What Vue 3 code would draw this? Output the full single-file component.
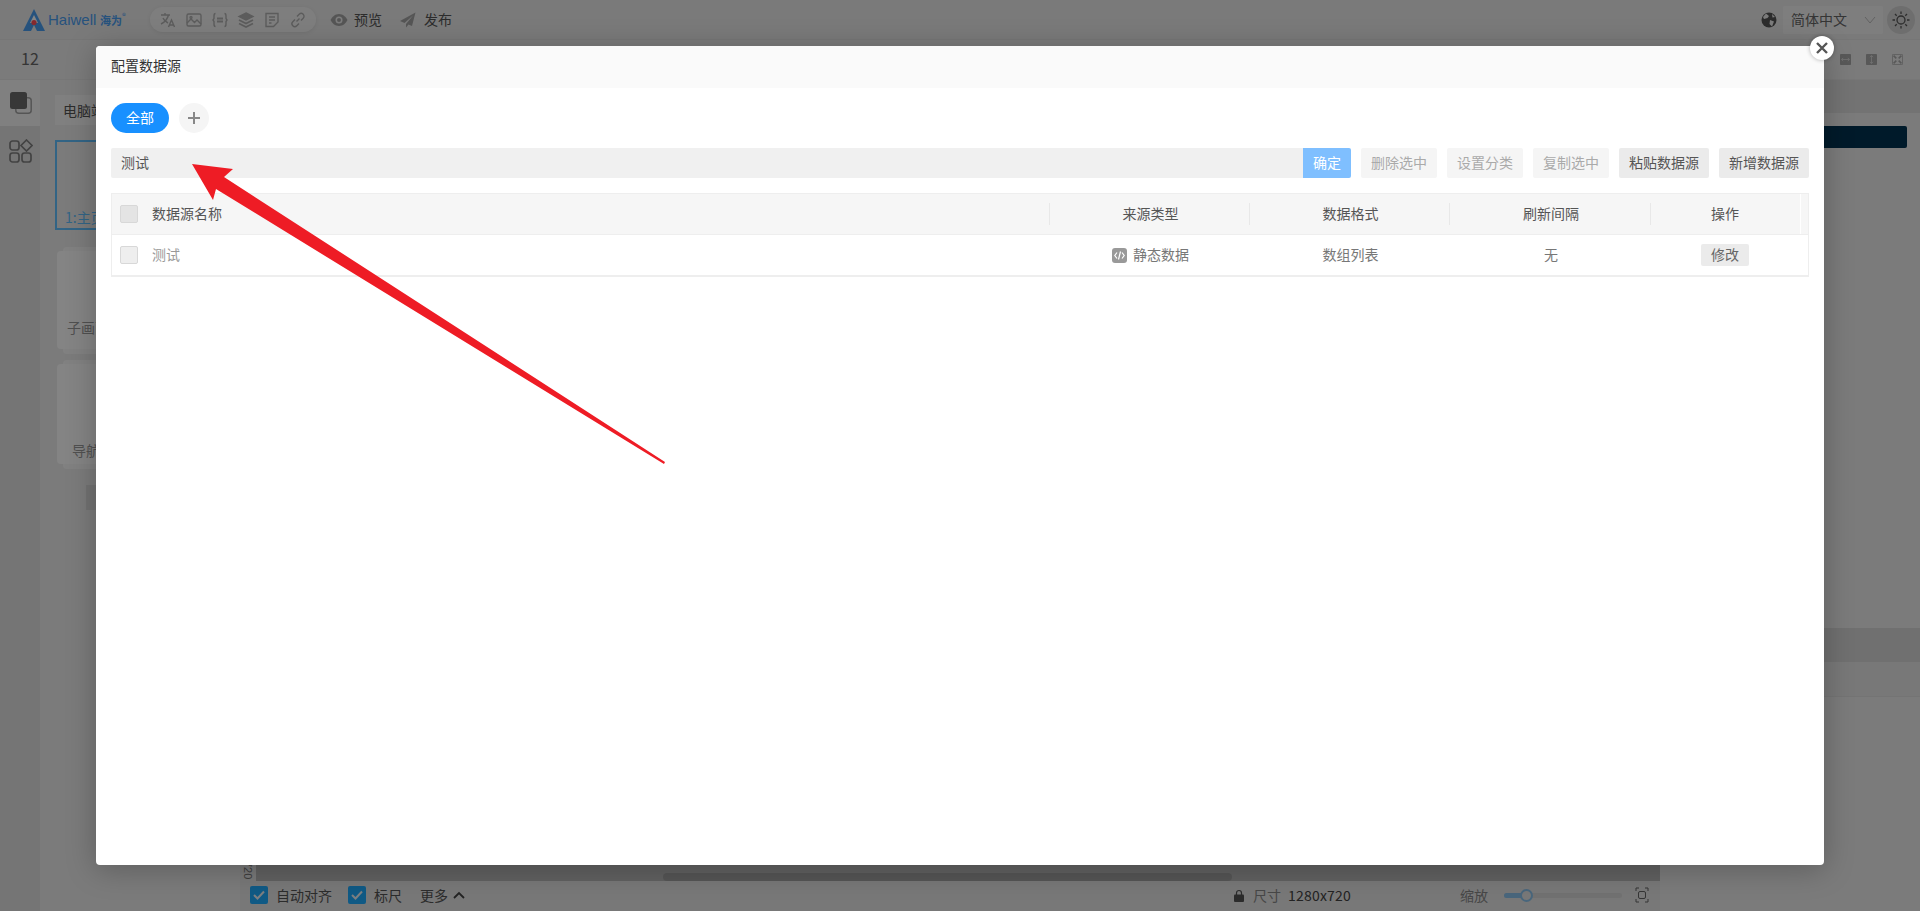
<script setup>
const topIcons = ['translate', 'image', 'code', 'layers', 'note', 'link']
const filterButtons = [
  { label: '删除选中', off: true },
  { label: '设置分类', off: true },
  { label: '复制选中', off: true },
  { label: '粘贴数据源', off: false },
  { label: '新增数据源', off: false }
]
</script>

<template>
  <div class="app">
    <header class="topbar">
      <div class="logo">
        <svg width="24" height="24" viewBox="0 0 24 24">
          <path d="M12 1 L1 23 H9 L12 17 L15 23 H23 Z" fill="#4a9ef0" />
          <path d="M12 7 L8 15 H16 Z" fill="#fff" />
          <circle cx="12" cy="14.500" r="2.600" fill="#ff5058" />
        </svg>
        <span class="logo-en">Haiwell</span>
        <span class="logo-cn">海为</span><span class="logo-r">®</span>
      </div>
      <div class="pill">
        <svg v-for="n in topIcons" :key="n" class="pill-icon" width="18" height="18" viewBox="0 0 18 18" fill="none" stroke="#b0b0b0" stroke-width="1.400">
          <template v-if="n === 'translate'">
            <path d="M2 4h9M6 2v2M9.500 4C8.500 8 6 11 2 13M4 7c1 2.500 3 4 5 5" />
            <path d="M9.500 16l3-7 3 7M10.500 14h4" />
          </template>
          <template v-else-if="n === 'image'">
            <rect x="2" y="3" width="14" height="12" rx="1.500" />
            <path d="M2 12l4-4 3.500 3.500L12 9l4 4" />
            <circle cx="6" cy="6.500" r="1" />
          </template>
          <template v-else-if="n === 'code'">
            <path d="M4.500 2.500C3 2.500 3 4 3 5v2.500L2 9l1 1.500V13c0 1 0 2.500 1.500 2.500M13.500 2.500C15 2.500 15 4 15 5v2.500L16 9l-1 1.500V13c0 1 0 2.500-1.500 2.500" />
            <path d="M6 7.500h6M6 10.500h6" stroke-width="1.800" />
          </template>
          <template v-else-if="n === 'layers'">
            <path d="M9 2l7 3.500L9 9 2 5.500Z" fill="#b0b0b0" />
            <path d="M2 9l7 3.500L16 9M2 12.500L9 16l7-3.500" stroke-width="1.800" />
          </template>
          <template v-else-if="n === 'note'">
            <path d="M3 2.500h12V11l-4.500 4.500H3Z" />
            <path d="M6 6h6M6 9h6M6 12h2.500" />
          </template>
          <template v-else>
            <path d="M7.500 10.500l3-3M6 8.500L3.800 10.700a2.800 2.800 0 0 0 4 4L10 12.500M8 5.500l2.200-2.200a2.800 2.800 0 0 1 4 4L12 9.500" />
          </template>
        </svg>
      </div>
      <div class="action">
        <svg width="18" height="14" viewBox="0 0 18 14">
          <path d="M9 1C5 1 2 4 .5 7 2 10 5 13 9 13s7-3 8.500-6C16 4 13 1 9 1Z" fill="#a4a4a4" />
          <circle cx="9" cy="7" r="3.500" fill="#eee" />
          <circle cx="9" cy="7" r="2" fill="#a4a4a4" />
        </svg>
        <span class="lift">预览</span>
      </div>
      <div class="action action-send">
        <svg width="16" height="16" viewBox="0 0 16 16">
          <path d="M15.500 .5L0 9l4.500 2L13 3.500 6 12v3.500l2.500-3 3.500 1.500Z" fill="#a4a4a4" />
        </svg>
        <span class="lift">发布</span>
      </div>
      <div class="top-right">
        <svg width="16" height="16" viewBox="0 0 16 16">
          <circle cx="8" cy="8" r="7.500" fill="#555" />
          <path d="M5 1.500L8 4 6.500 6 3 7 2 5ZM9 8l4 1.500-2 5L8.500 12ZM11 2l3 3-2.500 .5Z" fill="#eee" />
        </svg>
        <div class="lang">
          <span class="lift">简体中文</span>
          <svg width="12" height="8" viewBox="0 0 12 8" fill="none" stroke="#bbb"><path d="M1 1l5 6 5-6" /></svg>
        </div>
        <div class="theme">
          <svg width="20" height="20" viewBox="0 0 20 20" fill="none" stroke="#555" stroke-width="1.300">
            <circle cx="10" cy="10" r="4" />
            <path d="M10 1.500v2.500M10 16v2.500M1.500 10h2.500M16 10h2.500M4 4l1.700 1.700M14.300 14.300L16 16M4 16l1.700-1.700M14.300 5.700L16 4" />
          </svg>
        </div>
      </div>
    </header>

    <div class="toolbar">
      <span class="font-size">12</span>
      <div class="tool-icons">
        <svg class="tool-pin" width="3" height="10" viewBox="0 0 3 10"><rect x="1" width="1" height="10" fill="#888" /></svg>
        <svg width="11" height="11" viewBox="0 0 14 14"><rect width="14" height="14" rx="1" fill="#aaa" /><path d="M2 7h10M2 7l2-2M2 7l2 2M12 7l-2-2M12 7l-2 2" stroke="#ddd" fill="none" /></svg>
        <svg width="11" height="11" viewBox="0 0 14 14"><rect width="14" height="14" rx="1" fill="#aaa" /><path d="M7 2v10M7 2L5 4M7 2l2 2M7 12l-2-2M7 12l2-2" stroke="#ddd" fill="none" /></svg>
        <svg width="11" height="11" viewBox="0 0 14 14"><rect x=".5" y=".5" width="13" height="13" rx="1" fill="none" stroke="#aaa" /><path d="M2 2l3.500 3.500M12 2L8.500 5.500M2 12l3.500-3.500M12 12L8.500 8.500" stroke="#aaa" stroke-width="2" /></svg>
      </div>
    </div>

    <div class="workspace">
      <aside class="rail">
        <div class="rail-top">
          <svg width="22" height="22" viewBox="0 0 22 22">
            <rect x="5.800" y="5.800" width="15.400" height="15.400" rx="3" fill="none" stroke="#a4a4a4" stroke-width="1.500" />
            <rect x="0" y="0" width="17" height="17" rx="2.500" fill="#6c6c6c" />
          </svg>
        </div>
        <div class="rail-bottom">
          <svg width="24" height="24" viewBox="0 0 24 24" fill="none" stroke="#808080" stroke-width="1.700">
            <rect x="1" y="2" width="9" height="9" rx="2.500" />
            <rect x="1" y="14" width="9" height="9" rx="2.500" />
            <rect x="13" y="14" width="9" height="9" rx="2.500" />
            <path d="M17.500 1L23 6.500 17.500 12 12 6.500Z" />
          </svg>
        </div>
      </aside>

      <aside class="pages">
        <div class="page-tab"><span class="lift">电脑端</span></div>
        <div class="page-main"><span>1:主页</span></div>
        <div class="paper"><span>子画面</span></div>
        <div class="paper paper-nav"><span>导航栏</span></div>
        <div class="page-add"></div>
      </aside>

      <main class="stage">
        <div class="canvas">
          <div class="ruler"><span>720</span></div>
          <div class="canvas-area">
            <div class="scroll-thumb"></div>
          </div>
        </div>
        <footer class="statusbar">
          <span class="check">
            <svg width="12" height="10" viewBox="0 0 12 10" fill="none" stroke="#f0f4f8" stroke-width="2"><path d="M1 5l3.500 3.500L11 1.500" /></svg>
          </span>
          <span class="status-label">自动对齐</span>
          <span class="check check-second">
            <svg width="12" height="10" viewBox="0 0 12 10" fill="none" stroke="#f0f4f8" stroke-width="2"><path d="M1 5l3.500 3.500L11 1.500" /></svg>
          </span>
          <span class="status-label">标尺</span>
          <span class="status-label status-more">更多</span>
          <svg class="more-chev" width="12" height="8" viewBox="0 0 12 8" fill="none" stroke="#444" stroke-width="1.800"><path d="M1 7l5-5 5 5" /></svg>
          <span class="status-gap"></span>
          <svg width="10" height="13" viewBox="0 0 10 13"><path d="M2.500 6V4a2.500 2.500 0 0 1 5 0v2" fill="none" stroke="#555" stroke-width="1.200" /><rect y="5.500" width="10" height="7.500" rx="1" fill="#555" /></svg>
          <span class="status-dim size-label">尺寸</span>
          <span class="size-value">1280x720</span>
          <span class="status-dim zoom-label">缩放</span>
          <div class="slider">
            <div class="slider-fill"></div>
            <div class="slider-knob"></div>
          </div>
          <svg class="fit" width="14" height="16" viewBox="0 0 14 16" fill="none" stroke="#666"><path d="M1 4V1h3M10 1h3v3M13 12v3h-3M4 15H1v-3" /><rect x="3.500" y="4.500" width="7" height="7" rx="1.500" /></svg>
        </footer>
      </main>

      <aside class="inspector">
        <div class="insp-head"></div>
        <div class="insp-bar-wrap"><div class="insp-bar"></div></div>
        <div class="insp-fill"></div>
        <div class="insp-section"></div>
        <div class="insp-row"></div>
      </aside>
    </div>

    <div class="overlay"></div>

    <section class="modal">
      <h2 class="modal-title">配置数据源</h2>
      <div class="modal-body">
        <div class="tabs">
          <button class="tab-all">全部</button>
          <button class="tab-add">
            <svg width="14" height="14" viewBox="0 0 14 14" stroke="#888" stroke-width="2"><path d="M7 1v12M1 7h12" /></svg>
          </button>
        </div>
        <div class="filter">
          <div class="filter-input">测试</div>
          <button class="btn-ok">确定</button>
          <button
            v-for="b in filterButtons"
            :key="b.label"
            class="btn"
            :class="{ 'btn-off': b.off }"
          >{{ b.label }}</button>
        </div>
        <div class="table">
          <div class="tr thead">
            <div class="td td-name"><span class="box box-head"></span><span class="lift">数据源名称</span></div>
            <div class="td td-c"><span class="lift">来源类型</span></div>
            <div class="td td-c"><span class="lift">数据格式</span></div>
            <div class="td td-c"><span class="lift">刷新间隔</span></div>
            <div class="td td-c td-last"><span class="lift">操作</span></div>
            <div class="td gutter"></div>
          </div>
          <div class="tr tbody">
            <div class="td td-name"><span class="box"></span><span class="muted lift">测试</span></div>
            <div class="td td-c">
              <span class="src-icon">
                <svg width="11" height="9" viewBox="0 0 11 9" fill="none" stroke="#fff" stroke-width="1.200"><path d="M3 1.500L.8 4.500 3 7.500M8 1.500l2.200 3L8 7.500M6.500 .5l-2 8" /></svg>
              </span>
              <span class="lift">静态数据</span>
            </div>
            <div class="td td-c"><span class="lift">数组列表</span></div>
            <div class="td td-c"><span class="lift">无</span></div>
            <div class="td td-c td-last"><button class="edit">修改</button></div>
            <div class="td"></div>
          </div>
        </div>
      </div>
      <button class="close" aria-label="关闭">
        <svg width="14" height="14" viewBox="0 0 14 14" stroke="#555" stroke-width="2.400"><path d="M2 2l10 10M12 2L2 12" /></svg>
      </button>
    </section>

    <svg class="arrow" width="1920" height="911" viewBox="0 0 1920 911">
      <polygon points="192,164 233,169 224,177 665,462 664,464 216,189 213,200" fill="#ee1c25" />
    </svg>
  </div>
</template>

<style scoped>
.app {
  position: relative;
  width: 1920px;
  height: 911px;
  overflow: hidden;
  display: flex;
  flex-direction: column;
  background: #ececec;
  font-family: "Noto Sans CJK SC", "Liberation Sans", sans-serif;
  font-size: 14px;
  color: #666;
}
.lift { padding-bottom: 2px; }

/* top bar */
.topbar {
  height: 40px;
  flex: none;
  display: flex;
  align-items: center;
  padding-left: 22px;
  background: #eaeaea;
  border-bottom: 1px solid #e2e2e2;
  box-sizing: border-box;
}
.logo { display: flex; align-items: center; width: 128px; }
.logo-en {
  font-family: "Liberation Sans", sans-serif;
  font-size: 15px;
  color: #4a9ef0;
  margin-left: 2px;
  width: 52px;
}
.logo-cn { font-size: 11px; color: #4a9ef0; font-weight: 700; }
.logo-r { font-size: 8px; color: #4a9ef0; margin-top: -8px; }
.pill {
  width: 166px;
  height: 25px;
  border-radius: 13px;
  background: #f2f2f2;
  display: flex;
  align-items: center;
  justify-content: space-around;
  padding: 0 5px;
  box-sizing: border-box;
  box-shadow: 0 1px 4px rgba(0, 0, 0, .08);
}
.action {
  display: flex;
  align-items: center;
  gap: 6px;
  margin-left: 14px;
  color: #555;
}
.action-send { margin-left: 18px; gap: 8px; }
.top-right {
  margin-left: auto;
  display: flex;
  align-items: center;
  padding-right: 5px;
}
.lang {
  width: 100px;
  height: 28px;
  margin-left: 6px;
  padding: 0 7px 0 8px;
  box-sizing: border-box;
  display: flex;
  align-items: center;
  justify-content: space-between;
  background: #f2f2f2;
  border-radius: 2px;
  color: #666;
}
.theme {
  width: 28px;
  height: 28px;
  margin-left: 4px;
  border-radius: 50%;
  background: #d3d3d3;
  display: flex;
  align-items: center;
  justify-content: center;
}

/* tool row */
.toolbar {
  height: 40px;
  flex: none;
  display: flex;
  align-items: center;
  justify-content: space-between;
  padding: 0 17px 0 21px;
  background: #ececec;
  border-bottom: 1px solid #e4e4e4;
  box-sizing: border-box;
}
.font-size { font-size: 16px; color: #666; padding-bottom: 4px; }
.tool-icons { display: flex; align-items: center; gap: 15px; }
.tool-pin { margin-right: 4px; }

/* workspace */
.workspace { flex: 1; display: flex; min-height: 0; }
.rail { width: 40px; flex: none; display: flex; flex-direction: column; }
.rail-top {
  height: 46px;
  background: #f6f6f6;
  padding: 12px 0 0 10px;
  box-sizing: border-box;
}
.rail-bottom {
  flex: 1;
  background: #e1e1e1;
  padding: 13px 0 0 9px;
  box-sizing: border-box;
}
.pages {
  width: 200px;
  flex: none;
  background: #ececec;
  padding: 15px 0 0 15px;
  box-sizing: border-box;
  isolation: isolate;
}
.page-tab {
  width: 41px;
  height: 30px;
  line-height: 30px;
  padding-left: 8px;
  background: #f6f6f6;
  box-sizing: border-box;
  white-space: nowrap;
  overflow: hidden;
  color: #555;
}
.page-main {
  width: 41px;
  height: 90px;
  margin-top: 15px;
  border: 2px solid #60c0ff;
  border-right: 0;
  box-sizing: border-box;
  padding: 66px 0 0 8px;
  color: #60c0ff;
  line-height: 18px;
  white-space: nowrap;
  overflow: hidden;
}
.paper {
  position: relative;
  width: 39px;
  height: 98px;
  margin: 21px 0 0 2px;
  background: #fdfdfd;
  padding: 66px 0 0 10px;
  box-sizing: border-box;
  color: #999;
  white-space: nowrap;
  border-radius: 4px 0 0 4px;
}
.paper::before {
  content: "";
  position: absolute;
  left: 6px;
  top: -4px;
  bottom: -5px;
  width: 33px;
  background: #f8f8f8;
  border-radius: 4px 0 0 4px;
  z-index: -1;
}
.paper span { display: block; width: 29px; overflow: hidden; }
.paper-nav { height: 100px; margin-top: 15px; padding: 76px 0 0 15px; }
.paper-nav span { width: 24px; }
.page-add {
  width: 10px;
  height: 25px;
  margin: 21px 0 0 31px;
  background: #dadada;
}
.stage { flex: 1; min-width: 0; display: flex; flex-direction: column; }
.canvas { flex: 1; display: flex; min-height: 0; background: #bbb; }
.ruler {
  width: 16px;
  flex: none;
  background: #e8e8e8;
  display: flex;
  align-items: flex-end;
  justify-content: center;
  font-size: 11px;
  color: #777;
  font-family: "Liberation Sans", sans-serif;
}
.ruler span { writing-mode: vertical-rl; line-height: 16px; padding-bottom: 2px; }
.canvas-area {
  flex: 1;
  display: flex;
  align-items: flex-end;
  padding-left: 407px;
}
.scroll-thumb {
  width: 569px;
  height: 8px;
  border-radius: 4px;
  background: #a4a4a4;
}
.statusbar {
  height: 30px;
  flex: none;
  background: #e6e6e6;
  display: flex;
  align-items: center;
  padding: 0 0 2px 10px;
  box-sizing: border-box;
  color: #555;
}
.check {
  width: 18px;
  height: 18px;
  border-radius: 2px;
  background: #20acff;
  display: flex;
  align-items: center;
  justify-content: center;
  flex: none;
}
.check-second { margin-left: 16px; }
.status-label { margin-left: 8px; white-space: nowrap; }
.status-more { margin-left: 18px; }
.more-chev { margin-left: 5px; }
.status-gap { width: 769px; flex: none; }
.status-dim { color: #888; }
.size-label { margin-left: 9px; width: 35px; }
.size-value { color: #444; width: 172px; letter-spacing: .2px; }
.zoom-label { width: 44px; }
.slider {
  position: relative;
  width: 118px;
  height: 5px;
  border-radius: 3px;
  background: #d8d8d8;
}
.slider-fill { width: 22px; height: 5px; background: #8cc4ee; border-radius: 3px; }
.slider-knob {
  position: absolute;
  left: 16px;
  top: -4px;
  width: 9px;
  height: 9px;
  border: 2px solid #8cc4ee;
  border-radius: 50%;
  background: #e6e6e6;
}
.fit { margin-left: 13px; }

.inspector {
  width: 260px;
  flex: none;
  display: flex;
  flex-direction: column;
  background: #ececec;
}
.insp-head { height: 33px; flex: none; background: #dddddd; }
.insp-bar-wrap { padding: 13px 13px 0 0; display: flex; justify-content: flex-end; }
.insp-bar { width: 240px; height: 22px; background: #003251; border-radius: 2px; }
.insp-fill { flex: 1; }
.insp-section { height: 34px; flex: none; background: #d6d6d6; }
.insp-row { height: 34px; flex: none; margin-bottom: 214px; border-bottom: 1px solid #dedede; background: #e6e6e6; }

/* overlay and modal */
.overlay {
  position: absolute;
  inset: 0;
  background: rgba(0, 0, 0, .48);
}
.modal {
  position: absolute;
  left: 96px;
  top: 46px;
  width: 1728px;
  height: 819px;
  background: #fff;
  border-radius: 4px;
  box-shadow: 0 4px 30px rgba(0, 0, 0, .25);
  display: flex;
  flex-direction: column;
}
.modal-title {
  margin: 0;
  height: 42px;
  flex: none;
  line-height: 38px;
  padding-left: 15px;
  background: #fafafa;
  border-radius: 4px 4px 0 0;
  font-size: 14px;
  font-weight: 400;
  color: #333;
  box-sizing: border-box;
}
.modal-body { padding: 15px 15px 0; }
button {
  border: 0;
  font: inherit;
  cursor: pointer;
  padding: 0 0 2px;
}
.tabs { display: flex; gap: 10px; }
.tab-all {
  width: 58px;
  height: 30px;
  border-radius: 15px;
  background: #1890ff;
  color: #fff;
}
.tab-add {
  width: 30px;
  height: 30px;
  padding: 0;
  border-radius: 50%;
  background: #f5f5f5;
  display: flex;
  align-items: center;
  justify-content: center;
}
.filter { display: flex; margin-top: 15px; height: 30px; }
.filter-input {
  flex: 1;
  line-height: 28px;
  padding-left: 10px;
  background: #f0f0f0;
  border-radius: 2px 0 0 2px;
  color: #555;
}
.btn-ok {
  width: 48px;
  background: #7fbfff;
  color: #fff;
  border-radius: 0 2px 2px 0;
}
.btn {
  margin-left: 10px;
  padding: 0 10px 2px;
  background: #ebebeb;
  color: #555;
  border-radius: 2px;
  white-space: nowrap;
}
.btn-off { background: #f5f5f5; color: #aaa; }
.table {
  margin-top: 15px;
  border: 1px solid #eee;
  border-bottom: 2px solid #eee;
}
.tr {
  display: grid;
  grid-template-columns: 937px 200px 200px 201px 150px 8px;
  height: 41px;
}
.thead { background: #f6f6f6; color: #555; border-bottom: 1px solid #eee; box-sizing: content-box; height: 40px; }
.tbody { height: 40px; color: #777; }
.td { display: flex; align-items: center; }
.td-name { padding-left: 8px; gap: 14px; }
.td-c { justify-content: center; gap: 6px; position: relative; padding-left: 3px; }
.td-last { padding-left: 0; }
.thead .td-c::before {
  content: "";
  position: absolute;
  left: 0;
  top: 9px;
  bottom: 9px;
  width: 1px;
  background: #e8e8e8;
}
.gutter { border-left: 1px solid #fff; }
.box {
  width: 16px;
  height: 16px;
  border: 1px solid #d8d8d8;
  border-radius: 2px;
  background: #eee;
}
.box-head { background: #e4e4e4; }
.muted { color: #999; }
.src-icon {
  width: 15px;
  height: 15px;
  border-radius: 3px;
  background: #999;
  display: flex;
  align-items: center;
  justify-content: center;
}
.edit {
  width: 48px;
  height: 22px;
  border-radius: 2px;
  background: #ebebeb;
  color: #666;
}
.close {
  position: absolute;
  right: -10px;
  top: -10px;
  width: 24px;
  height: 24px;
  padding: 0;
  border-radius: 50%;
  background: #fff;
  display: flex;
  align-items: center;
  justify-content: center;
  box-shadow: 0 0 4px rgba(0, 0, 0, .3);
}
.arrow { position: absolute; left: 0; top: 0; pointer-events: none; }
</style>

<style>
html, body { margin: 0; overflow: hidden; }
</style>
